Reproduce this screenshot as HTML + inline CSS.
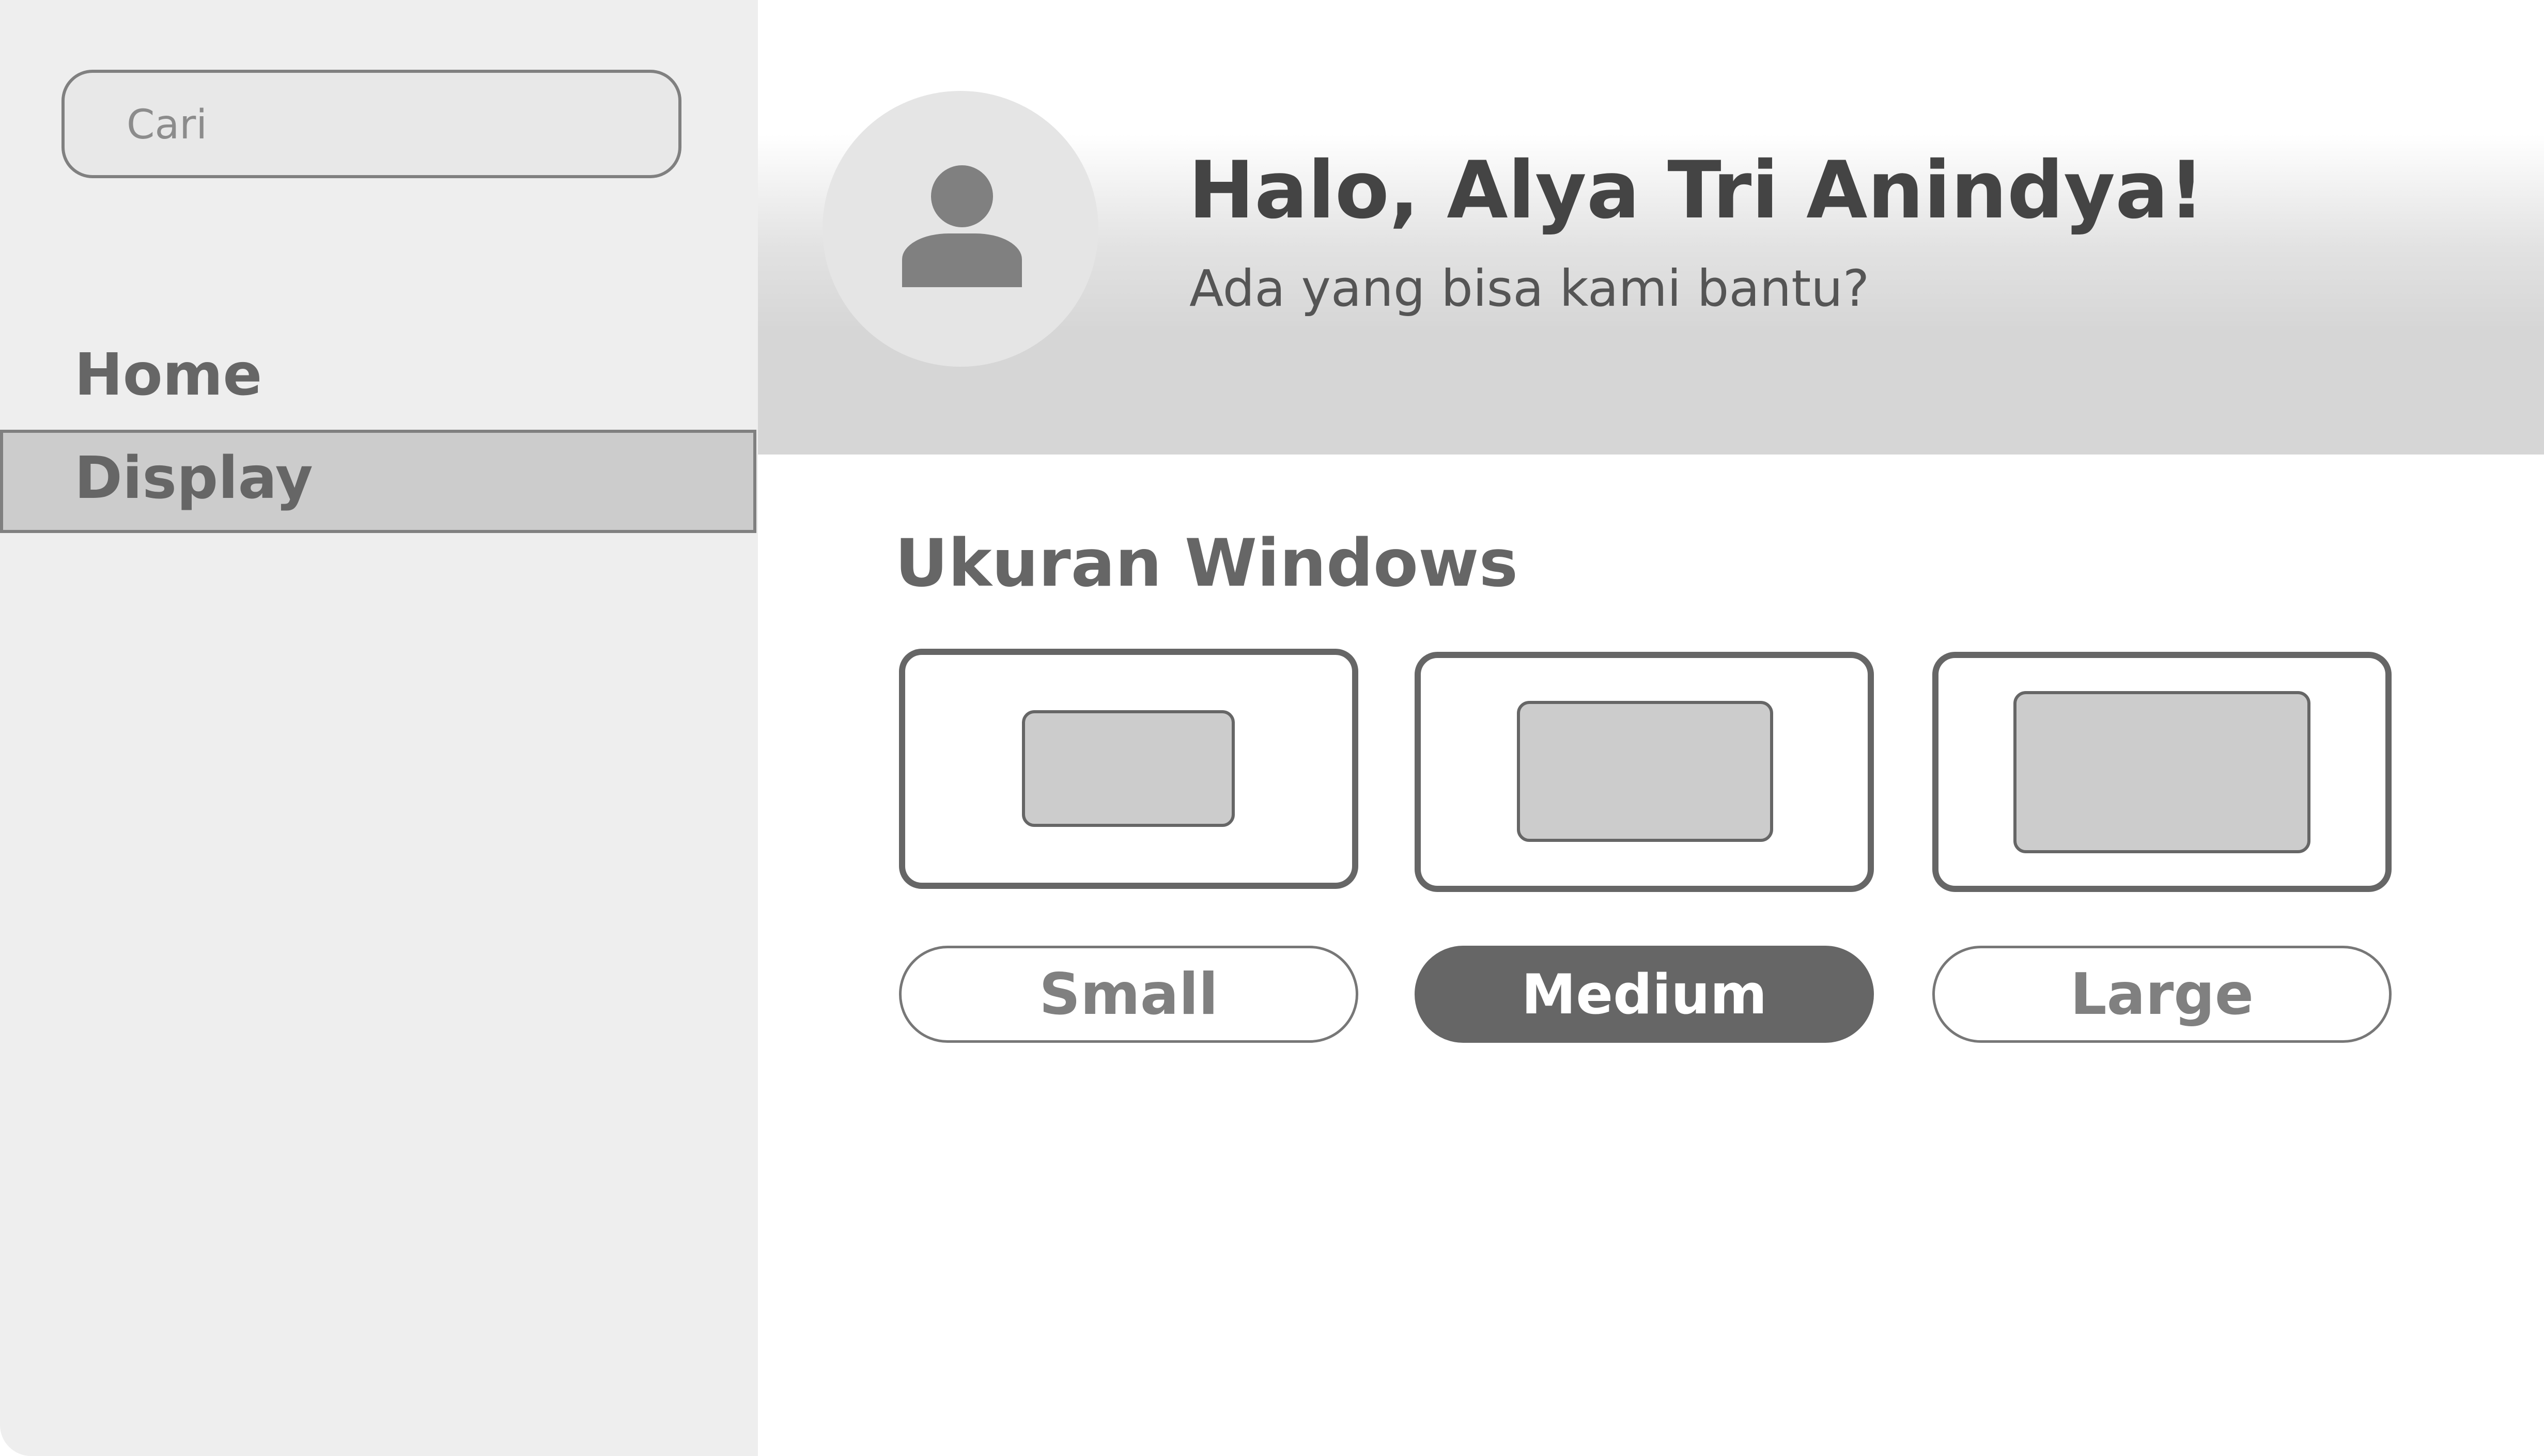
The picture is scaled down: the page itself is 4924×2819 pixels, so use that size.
<!DOCTYPE html>
<html><head><meta charset="utf-8"><style>
*{margin:0;padding:0;box-sizing:border-box}
body{width:4924px;height:2819px;background:#fff;position:relative;overflow:hidden;font-family:"DejaVu Sans","Liberation Sans",sans-serif}
.a{position:absolute}
#side{left:0;top:0;width:1467px;height:2819px;background:#eeeeee;border-bottom-left-radius:60px}
#search{left:119px;top:135px;width:1200px;height:210px;border:6px solid #808080;border-radius:60px;background:#e8e8e8}
#search span{position:absolute;left:120px;top:56px;font-size:78px;color:#8c8c8c}
#home{left:144px;top:661px;font-size:112px;font-weight:bold;color:#666}
#disp{left:0;top:832px;width:1464px;height:200px;background:#cccccc;border:6px solid #808080}
#disp span{position:absolute;left:138px;top:23px;font-size:112px;font-weight:bold;color:#666}
#hdr{left:1467px;top:0;width:3457px;height:880px;background:linear-gradient(#fff 0px,#fff 260px,#e2e2e2 480px,#d6d6d6 640px,#d6d6d6 880px)}
#av{left:1592px;top:176px;width:534px;height:534px;border-radius:50%;background:#e5e5e5}
#head{left:1802px;top:320px;width:120px;height:120px;border-radius:50%;background:#808080}
#body{left:1746px;top:452px;width:232px;height:104px;background:#808080;border-radius:90px 90px 0 0/50px 50px 0 0}
#t1{left:2300px;top:280px;font-size:153px;font-weight:bold;color:#444}
#t2{left:2302px;top:502px;font-size:97px;color:#555}
#uk{left:1732px;top:1016px;font-size:127px;font-weight:bold;color:#666}
.card{width:889px;height:465px;border:12px solid #666;border-radius:44px;background:#fff}
.in{background:#ccc;border:6px solid #666;border-radius:24px}
.btn{width:889px;height:188px;border:5px solid #777;border-radius:94px;background:#fff;display:flex;align-items:center;justify-content:center;font-size:111px;font-weight:bold;color:#808080}
</style></head><body>
<div id="side" class="a"></div>
<div id="search" class="a"><span>Cari</span></div>
<div id="home" class="a">Home</div>
<div id="disp" class="a"><span>Display</span></div>
<div id="hdr" class="a"></div>
<div id="av" class="a"></div>
<div id="head" class="a"></div>
<div id="body" class="a"></div>
<div id="t1" class="a">Halo, Alya Tri Anindya!</div>
<div id="t2" class="a">Ada yang bisa kami bantu?</div>
<div id="uk" class="a">Ukuran Windows</div>
<div class="a card" style="left:1740px;top:1256px"></div>
<div class="a card" style="left:2738px;top:1262px"></div>
<div class="a card" style="left:3740px;top:1262px"></div>
<div class="a in" style="left:1978px;top:1375px;width:412px;height:226px"></div>
<div class="a in" style="left:2936px;top:1357px;width:496px;height:273px"></div>
<div class="a in" style="left:3897px;top:1338px;width:575px;height:314px"></div>
<div class="a btn" style="left:1740px;top:1831px">Small</div>
<div class="a btn" style="left:2738px;top:1831px;background:#666;border-color:#666;color:#fff;font-size:106px">Medium</div>
<div class="a btn" style="left:3740px;top:1831px">Large</div>
</body></html>
